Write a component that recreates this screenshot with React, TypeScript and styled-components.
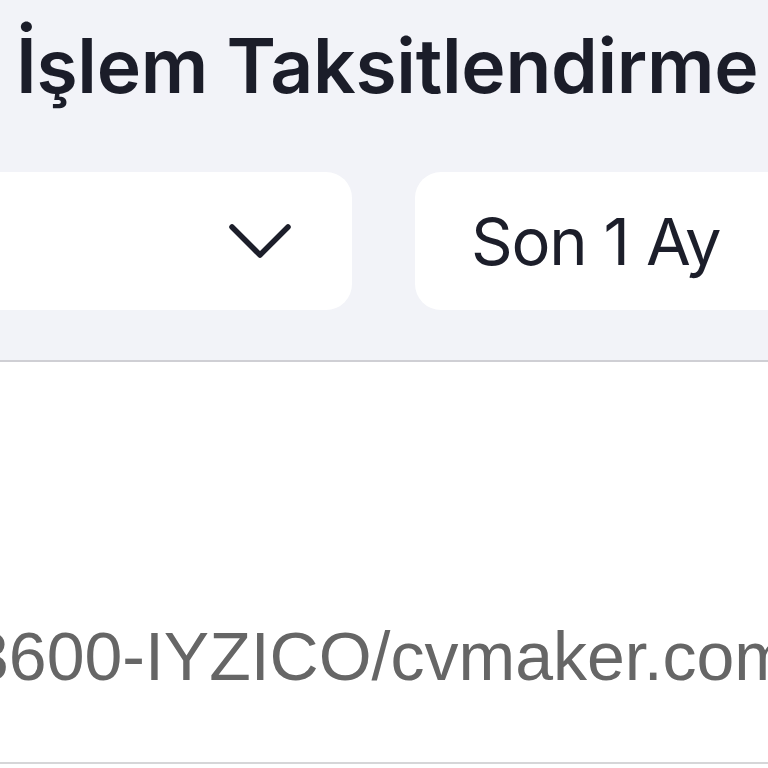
import React from "react";
import styled, { createGlobalStyle } from "styled-components";

const GlobalStyle = createGlobalStyle`
  html, body {
    margin: 0;
    padding: 0;
    background: #ffffff;
  }
  body {
    width: 768px;
    height: 768px;
    overflow: hidden;
  }
`;

function Chevron() {
  return (
    <svg width="64" height="40" viewBox="0 0 64 40" fill="none">
      <path
        d="M4 6 L32 34 L60 6"
        stroke="#1c1e2a"
        strokeWidth="5.5"
        strokeLinecap="round"
        strokeLinejoin="round"
      />
    </svg>
  );
}

function App() {
  return (
    <Page>
      <GlobalStyle />
      <Header>
        <Title>İşlem Taksitlendirme</Title>
        <FilterRow>
          <SelectBox>
            <Chevron />
          </SelectBox>
          <PeriodBox>Son 1 Ay</PeriodBox>
        </FilterRow>
      </Header>
      <Divider />
      <Body>
        <MerchantText>3600-IYZICO/cvmaker.com</MerchantText>
      </Body>
      <BottomLine />
    </Page>
  );
}

const Page = styled.div`
  width: 768px;
  height: 768px;
  overflow: hidden;
  display: flex;
  flex-direction: column;
  background: #ffffff;
`;

const Header = styled.div`
  background: #f2f3f8;
  display: flex;
  flex-direction: column;
  height: 360px;
  box-sizing: border-box;
`;

const Title = styled.h1`
  margin: 0;
  padding: 14px 0 0 16px;
  font-family: Inter, "Noto Sans", sans-serif;
  font-weight: 600;
  font-size: 75px;
  line-height: 104px;
  letter-spacing: -0.3px;
  color: #1b1d29;
  white-space: nowrap;
`;

const FilterRow = styled.div`
  display: flex;
  gap: 63px;
  margin-top: 54px;
  margin-left: -120px;
`;

const Card = styled.div`
  height: 138px;
  background: #ffffff;
  border-radius: 26px;
  display: flex;
  align-items: center;
  box-sizing: border-box;
  flex-shrink: 0;
`;

const SelectBox = styled(Card)`
  width: 472px;
  justify-content: flex-end;
  padding-right: 60px;
`;

const PeriodBox = styled(Card)`
  width: 460px;
  padding-left: 56px;
  font-family: Inter, "Noto Sans", sans-serif;
  font-weight: 400;
  font-size: 65px;
  color: #1c1e2a;
  letter-spacing: -1.2px;
`;

const Divider = styled.div`
  height: 2px;
  background: #cfcfd4;
`;

const Body = styled.div`
  height: 400px;
  display: flex;
  align-items: flex-start;
  padding-top: 254px;
  box-sizing: border-box;
`;

const MerchantText = styled.div`
  margin-left: -29px;
  font-family: "Liberation Sans", Arial, sans-serif;
  font-size: 68px;
  line-height: 80px;
  color: #666666;
  white-space: nowrap;
`;

const BottomLine = styled.div`
  height: 2px;
  background: #d6d6d8;
`;

export default App;
